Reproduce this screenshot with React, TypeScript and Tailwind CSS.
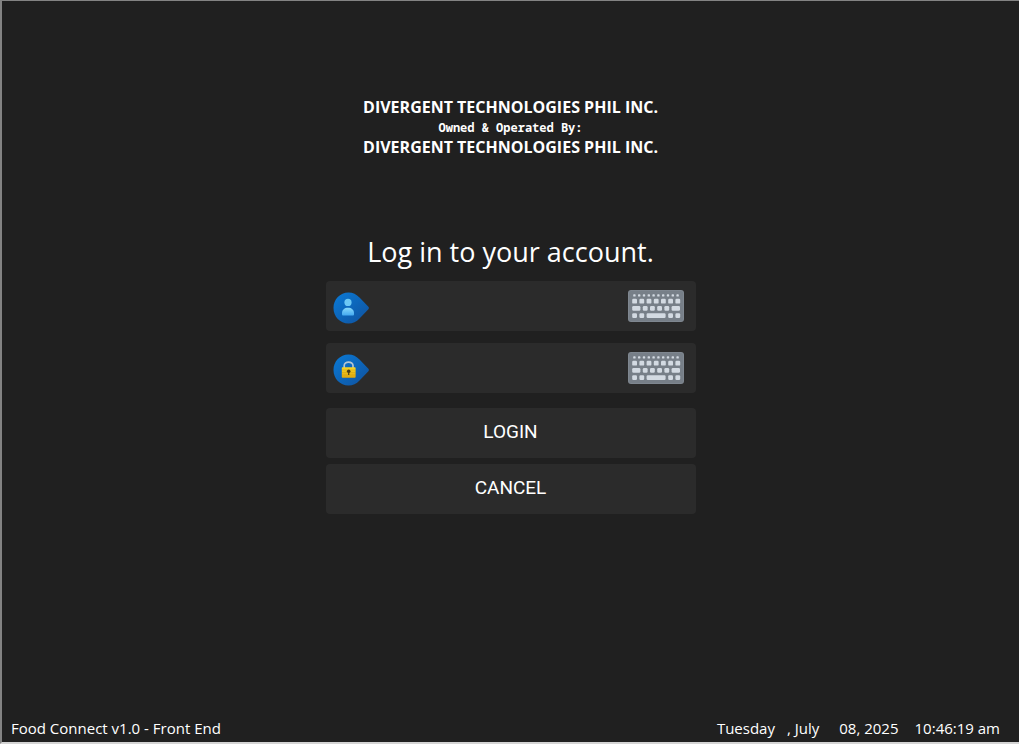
import React from "react";

const badgeShape =
  "M15.5 0.5C7 0.5 0.5 7.4 0.5 16S7 31.5 15.5 31.5C19.8 31.5 23.5 29.7 26.5 26.5L35.4 17.2Q36.6 16 35.4 14.8L26.5 5.6C23.5 2.4 19.8 0.5 15.5 0.5Z";

function UserBadge() {
  return (
    <svg width="37" height="32" viewBox="0 0 37 32" aria-hidden="true">
      <defs>
        <linearGradient id="user-bg" x1="0" y1="0" x2="1" y2="1">
          <stop offset="0" stopColor="#0a7ad6" />
          <stop offset="1" stopColor="#10519d" />
        </linearGradient>
        <linearGradient id="user-fg" x1="0" y1="0" x2="0" y2="1">
          <stop offset="0" stopColor="#86d8fb" />
          <stop offset="1" stopColor="#45aaf0" />
        </linearGradient>
      </defs>
      <path d={badgeShape} fill="url(#user-bg)" />
      <circle cx="15" cy="10.4" r="3.6" fill="#6cc8f5" />
      <path d="M9 21.2C9 17.8 11.5 15.8 15 15.8S21 17.8 21 21.2V22.4Q21 23.4 20 23.4H10Q9 23.4 9 22.4Z" fill="url(#user-fg)" />
    </svg>
  );
}

function LockBadge() {
  return (
    <svg width="37" height="32" viewBox="0 0 37 32" aria-hidden="true">
      <defs>
        <linearGradient id="lock-bg" x1="0" y1="0" x2="1" y2="1">
          <stop offset="0" stopColor="#0a7ad6" />
          <stop offset="1" stopColor="#10519d" />
        </linearGradient>
        <linearGradient id="lock-fg" x1="0" y1="0" x2="0" y2="1">
          <stop offset="0" stopColor="#f7d62a" />
          <stop offset="1" stopColor="#dfa70c" />
        </linearGradient>
      </defs>
      <path d={badgeShape} fill="url(#lock-bg)" />
      <path d="M11.2 14V11.6C11.2 6.9 20 6.9 20 11.6V14" fill="none" stroke="#b4c6d3" strokeWidth="1.7" />
      <rect x="8.8" y="13.2" width="13.8" height="10.6" rx="0.8" fill="url(#lock-fg)" />
      <path d="M9 16H22.4M9 18.5H22.4M9 21H22.4" stroke="#c89a10" strokeWidth="0.4" />
      <circle cx="15.7" cy="17.3" r="1.8" fill="#4a3d17" />
      <path d="M15.1 17.5H16.3V21H15.1Z" fill="#4a3d17" />
    </svg>
  );
}

function KeyboardIcon() {
  return (
    <svg width="56" height="32" viewBox="0 0 56 32" aria-hidden="true">
      <rect width="56" height="32" rx="3" fill="#7f8790" />
      <rect x="1" y="1" width="54" height="30" rx="2" fill="#777f88" />
      <g fill="#d3dae2">
        {[0, 1, 2, 3, 4, 5, 6, 7, 8, 9].map((i) => (
          <rect key={i} x={5.2 + i * 4.8} y="4.2" width="2.4" height="2.4" rx="0.7" />
        ))}
        {[4.2, 11.4, 18.6, 25.8, 33, 40.2, 47.4].map((x) => (
          <rect key={x} x={x} y="8.8" width="4.8" height="4.8" rx="1.2" />
        ))}
        <rect x="4.2" y="16" width="8.2" height="4.8" rx="1.2" />
        {[14.8, 22, 29.2, 36.4].map((x) => (
          <rect key={x} x={x} y="16" width="4.8" height="4.8" rx="1.2" />
        ))}
        <rect x="43.6" y="16" width="8.4" height="4.8" rx="1.2" />
        {[4.2, 11.4, 40.2, 47.4].map((x) => (
          <rect key={x} x={x} y="23.2" width="4.8" height="4.8" rx="1.2" />
        ))}
        <rect x="18.6" y="23.2" width="19" height="4.8" rx="1.2" />
      </g>
    </svg>
  );
}

type FieldProps = { id: string; label: string; type: string; badge: React.ReactNode };

function Field({ id, label, type, badge }: FieldProps) {
  return (
    <div className="flex h-[50px] items-center rounded bg-[#2b2b2b] pr-3 pl-[7px]">
      <label htmlFor={id} aria-label={label} className="pt-1">
        {badge}
      </label>
      <input id={id} type={type} aria-label={label} className="h-full min-w-0 flex-1 bg-transparent px-2 text-lg text-white outline-none" />
      <button type="button" aria-label={`Keyboard for ${label}`}>
        <KeyboardIcon />
      </button>
    </div>
  );
}

const buttonClass =
  "flex h-[50px] items-center justify-center rounded bg-[#2b2b2b] pb-0.5 font-[Roboto,sans-serif] text-[19px] leading-6 text-white";

export default function App() {
  return (
    <main className="flex min-h-screen flex-col border-t border-b-2 border-l-2 border-t-[#838383] border-b-[#d4d4d4] border-l-[#838383] bg-[#202020] font-['Open_Sans',sans-serif] text-white">
      <header className="pt-24 text-center font-bold">
        <h1 className="text-base leading-5">DIVERGENT TECHNOLOGIES PHIL INC.</h1>
        <p className="pt-0.5 font-['Noto_Sans_Mono','DejaVu_Sans_Mono',monospace] text-[12px] leading-[18px]">Owned &amp; Operated By:</p>
        <p className="text-base leading-5">DIVERGENT TECHNOLOGIES PHIL INC.</p>
      </header>
      <form className="mx-auto mt-[75px] flex w-[370px] max-w-full flex-col" onSubmit={(e) => e.preventDefault()}>
        <h2 className="mb-[9px] text-center text-[27px] leading-10 whitespace-nowrap">Log in to your account.</h2>
        <div className="flex flex-col gap-3">
          <Field id="username" label="Username" type="text" badge={<UserBadge />} />
          <Field id="password" label="Password" type="password" badge={<LockBadge />} />
        </div>
        <div className="mt-[15px] flex flex-col gap-1.5">
          <button type="submit" className={buttonClass}>LOGIN</button>
          <button type="button" className={buttonClass}>CANCEL</button>
        </div>
      </form>
      <footer className="mt-auto flex justify-between pr-[19px] pb-0.5 pl-[9px] text-[15px] leading-6">
        <span>Food Connect v1.0 - Front End</span>
        <time dateTime="2025-07-08T10:46:19" className="flex">
          <span className="mr-3">Tuesday</span>
          <span className="mr-5">, July</span>
          <span className="mr-4">08, 2025</span>
          <span>10:46:19 am</span>
        </time>
      </footer>
    </main>
  );
}
